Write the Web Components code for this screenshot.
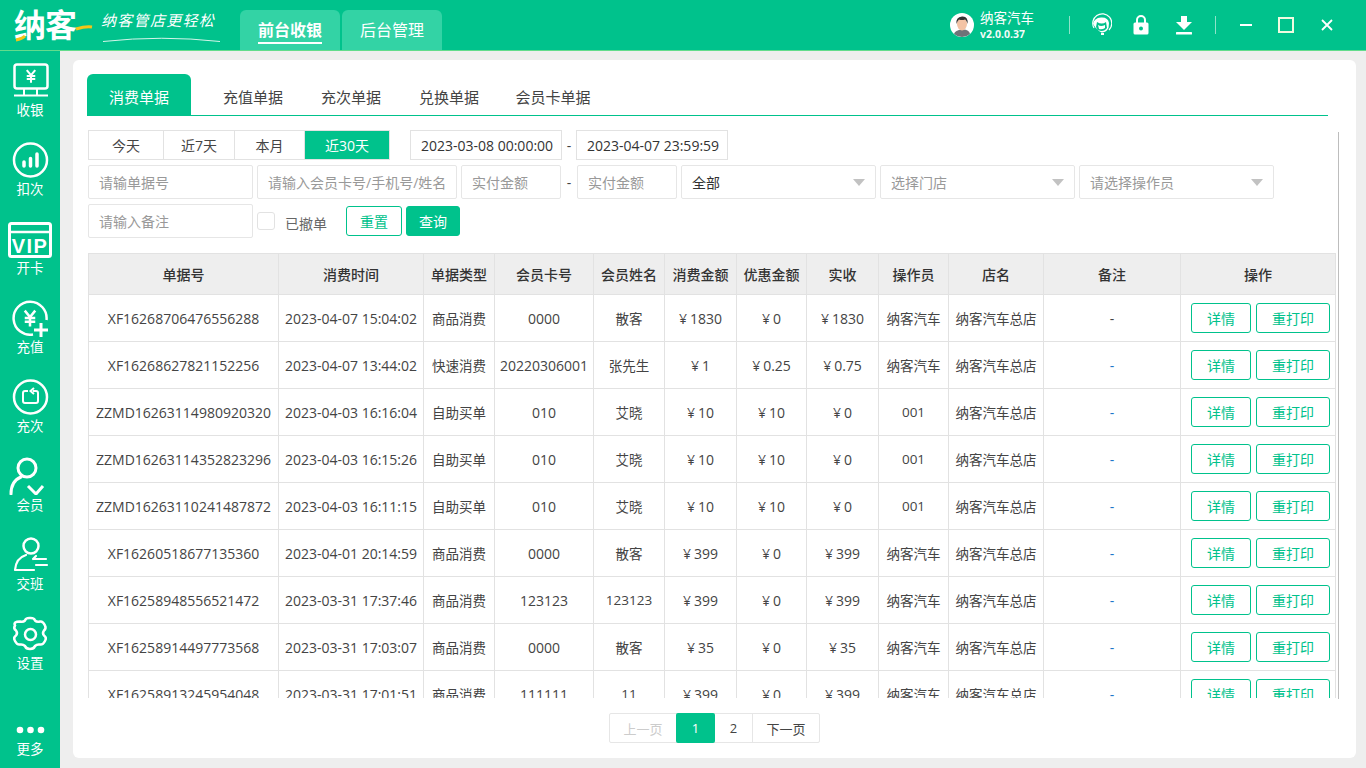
<!DOCTYPE html>
<html lang="zh"><head><meta charset="utf-8"><title>纳客</title>
<style>
html,body{margin:0;height:100%;overflow:hidden}
body{font-family:"Open Sans","Noto Sans CJK SC",sans-serif;font-size:14px;color:#444}
</style></head><body>
<nk-app></nk-app>
<script>
const G='#00c28c';
const base=`*{box-sizing:border-box}`;
function def(name,html,init){
  customElements.define(name,class extends HTMLElement{
    constructor(){super();this.attachShadow({mode:'open'}).innerHTML=typeof html==='function'?html(this):html;}
    connectedCallback(){init&&!this._i&&(this._i=1,init(this));}
  });
}
const W=(d,w,h,extra='')=>`<svg xmlns="http://www.w3.org/2000/svg" width="${w}" height="${h}" viewBox="0 0 ${w} ${h}" fill="none" stroke="#fff" stroke-width="3" ${extra}>${d}</svg>`;

def('nk-top-tab',`<style>${base}:host{display:flex;width:100px;height:40px;background:#33d3a5;border-radius:6px 6px 0 0;align-items:center;justify-content:center;color:#fff;font-size:16px}
:host([active]) span{font-weight:700;border-bottom:2px solid #fff;line-height:22px;padding-bottom:1px;margin-top:3px}
span{display:block;line-height:22px}</style><span><slot></slot></span>`);

def('nk-topbar',`<style>${base}
:host{display:flex;height:51px;background:${G};border-bottom:1px solid #63dc8c;color:#fff;flex:none;position:relative}
.logo{width:240px;height:50px;flex:none;display:flex;align-items:center;position:relative}
.mark{font:700 32px/50px "Noto Sans CJK SC",sans-serif;margin-left:14px;letter-spacing:-1px;width:74px;white-space:nowrap;position:relative;top:-2px}
.acc{position:absolute;left:14px;top:0}
.sl{font:italic 15px/20px "Noto Sans CJK SC",sans-serif;letter-spacing:1.3px;margin-left:13px;white-space:nowrap;position:relative;top:-5px;width:125px}
.sw{position:absolute;left:102px;top:37px}
.tabs{display:flex;gap:2px;align-self:flex-end}
.right{margin-left:auto;display:flex;align-items:center;height:50px}
.user{margin-left:6px;line-height:1}
.n{font-size:13.5px;line-height:18px;margin-top:1px}
.v{font-size:10.5px;font-weight:700;line-height:15px;opacity:.95}
.div{width:1px;height:18px;background:#8fe3c9;flex:none}
svg{display:block;flex:none}
</style>
<div class="logo"><div class="mark">纳客</div>
<svg class="acc" width="90" height="50" viewBox="0 0 90 50" fill="none"><path d="M2 40q6-1 9-4" stroke="#f5c518" stroke-width="3"/><path d="M62 29q10-3 16-2" stroke="#f5c518" stroke-width="3"/></svg>
<div class="sl">纳客管店更轻松</div>
<svg class="sw" width="120" height="6" viewBox="0 0 120 6" fill="none"><path d="M1 4.5Q60-2 118 4.5" stroke="#d5f5ea" stroke-width="1"/></svg>
</div>
<div class="tabs"><nk-top-tab active>前台收银</nk-top-tab><nk-top-tab>后台管理</nk-top-tab></div>
<div class="right">
<svg width="24" height="24" viewBox="0 0 24 24"><circle cx="12" cy="12" r="12" fill="#fff"/><path d="M4 21q1-4 8-4.500t8 4.500q-3.500 3-8 3t-8-3z" fill="#6f7378"/><ellipse cx="12" cy="11" rx="5" ry="6.500" fill="#f3c3a5"/><path d="M6.500 11q-1-7 5.500-7.500t5.500 7.500q-1-4-2.500-4.500-3 1-6 0-1.500 1-2.500 4.500z" fill="#333"/></svg>
<div class="user"><div class="n">纳客汽车</div><div class="v">v2.0.0.37</div></div>
<div class="div" style="margin-left:35px"></div>
<svg style="margin-left:20px" width="22" height="24" viewBox="0 0 22 24" fill="none"><path d="M4 15A9.500 9.500 0 1 1 19 17" stroke="#fff" stroke-width="1.200"/><path d="M3 11q1-6 8-6.500t8 5.500l-.5 5q-2 4-6 4.500l-1 0q-3-1-4-3.500-2-.5-4.500-5.500z" fill="#fff"/><path d="M7 9q5 3 9 0l1 6q-2 3-5.500 3T6 14z" fill="${G}"/><path d="M8 12q3 2 7 0l0 3q-3 2-6 1z" fill="#fff"/><path d="M14 21h-3" stroke="#fff" stroke-width="2"/></svg>
<svg style="margin-left:21px" width="16" height="20" viewBox="0 0 16 20" fill="none"><path d="M4 8V5a4 4 0 0 1 8 0v3" stroke="#fff" stroke-width="2"/><rect x=".5" y="7.500" width="15" height="12" rx="1.500" fill="#fff"/><circle cx="8" cy="13.500" r="2" fill="${G}"/></svg>
<svg style="margin-left:26px" width="18" height="19" viewBox="0 0 18 19"><path d="M6 0h6v6h5l-8 8-8-8h5z" fill="#fff"/><rect x="1" y="16" width="16" height="2.500" rx=".5" fill="#fff"/></svg>
<div class="div" style="margin-left:22px"></div>
<svg style="margin-left:24px" width="12" height="4" viewBox="0 0 12 4"><rect y="1" width="12" height="2" fill="#fff"/></svg>
<svg style="margin-left:26px" width="16" height="16" viewBox="0 0 16 16" fill="none"><rect x="1" y="1" width="14" height="14" stroke="#f0fbe0" stroke-width="2"/></svg>
<svg style="margin-left:27px;margin-right:33px" width="12" height="12" viewBox="0 0 12 12" fill="none"><path d="M1 1l10 10M11 1L1 11" stroke="#fff" stroke-width="1.800"/></svg>
</div>`);

def('nk-side-item',`<style>${base}:host{display:flex;flex-direction:column;align-items:center;height:79px;color:#fff;font-size:13.500px;line-height:20px}
.i{height:44px;width:60px;flex:none}:host([short]){height:auto}:host([short]) .i{height:18px}
span{display:block}</style><div class="i"><slot name="icon"></slot></div><span><slot></slot></span>`);

const yen=(x,y,s=1)=>`<path transform="translate(${x} ${y}) scale(${s})" d="M-5-7l5 6 5-6M0-1V8M-5 0H5M-5 3.500H5" stroke-width="2.400"/>`;
def('nk-sidebar',`<style>${base}:host{display:flex;flex-direction:column;width:60px;background:${G};padding:5px 0 9px;flex:none}
.b{margin-top:auto}svg{display:block}</style>
<nk-side-item><span slot="icon">${W(`<rect x="14.500" y="8.500" width="33" height="24" rx="2.500" stroke-width="2.500"/>${yen(31,20,.85)}<path d="M24 33v7M37 33v7M14 39.500h34" stroke-width="2"/>`,60,44)}</span>收银</nk-side-item>
<nk-side-item><span slot="icon">${W(`<circle cx="30.500" cy="25" r="16.500" stroke-width="2.500"/><path d="M24 27v4M30.500 23.500v7.500M37 19v12" stroke-linecap="round" stroke-width="3.500"/>`,60,44)}</span>扣次</nk-side-item>
<nk-side-item><span slot="icon">${W(`<rect x="9.500" y="9.500" width="41" height="33" rx="2" stroke-width="3"/><path d="M9 18h42" stroke-width="2.500"/><text x="30" y="39" text-anchor="middle" fill="#fff" stroke="none" font-family="Liberation Sans" font-weight="700" font-size="20" letter-spacing="1.500">VIP</text>`,60,44)}</span>开卡</nk-side-item>
<nk-side-item><span slot="icon">${W(`<path d="M33 41.500A16.500 16.500 0 1 1 46.500 27" stroke-width="2.500"/>${yen(30,25,1.050)}<path d="M41 30v14M34 37h14" stroke-width="3"/>`,60,44)}</span>充值</nk-side-item>
<nk-side-item><span slot="icon">${W(`<circle cx="30.500" cy="25" r="16.500" stroke-width="2.500"/><path d="M28 19h-3a2 2 0 0 0-2 2v8a2 2 0 0 0 2 2h11a2 2 0 0 0 2-2v-8a2 2 0 0 0-2-2h-3M34 16l-3.500 3 3.500 3" stroke-width="2"/>`,60,44)}</span>充次</nk-side-item>
<nk-side-item><span slot="icon">${W(`<circle cx="27" cy="17" r="9" stroke-width="3"/><path d="M11 43q0-13 10-17" stroke-width="3" stroke-linecap="round"/><path d="M28 35l8 8 7-8" stroke-width="3"/>`,60,44)}</span>会员</nk-side-item>
<nk-side-item><span slot="icon">${W(`<circle cx="31" cy="16" r="7.500" stroke-width="2.500"/><path d="M15 40q1-12 11-15M15 40h19M33 29h13M33 29l3-3M36 35h11" stroke-width="2.200" stroke-linecap="round"/>`,60,44)}</span>交班</nk-side-item>
<nk-side-item><span slot="icon">${W(`<path d="M30.500 9q4 0 4.500 2.500 2 2 5 1 3-.500 5 4 1.500 3-1 5-2 2.500 0 5 3 2 1 5.500-2 4-5 3.500-3-.500-5 1.500-1 3-5 3t-5-3q-2-2-5-1.500-3 .5-5-3.500-2-3.500 1-5.500 2-2.500 0-5-3-2-1-5-2-4 5-4 3 1 5-1 .500-2.500 4.500-2.500z" stroke-width="2.500"/><circle cx="30.500" cy="25.500" r="5.500" stroke-width="2.500"/>`,60,44)}</span>设置</nk-side-item>
<nk-side-item short class="b"><span slot="icon"><svg width="60" height="18" viewBox="0 0 60 18"><circle cx="20" cy="9" r="3.300" fill="#fff"/><circle cx="30.500" cy="9" r="3.300" fill="#fff"/><circle cx="41" cy="9" r="3.300" fill="#fff"/></svg></span>更多</nk-side-item>`);

def('nk-tab',`<style>${base}:host{display:flex;align-items:center;justify-content:center;width:104px;height:42px;margin-right:-4px;font-size:15px;color:#444;border-radius:6px 6px 0 0;padding-top:2px}
:host([active]){background:${G};color:#fff;margin-right:-4px}</style><slot></slot>`);
def('nk-tabs',`<style>${base}:host{display:flex;border-bottom:1px solid ${G};height:42px;margin-right:14px}
nk-tab{flex:none}</style>
<nk-tab active>消费单据</nk-tab><nk-tab style="margin-left:12px;width:108px">充值单据</nk-tab><nk-tab style="margin-left:-6px;width:108px">充次单据</nk-tab><nk-tab style="margin-left:-6px;width:108px">兑换单据</nk-tab><nk-tab style="margin-left:-2px;width:112px">会员卡单据</nk-tab>`);

def('nk-seg',`<style>${base}:host{display:flex;height:30px;border:1px solid #e2e2e2;flex:none}
span{display:flex;align-items:center;justify-content:center;border-right:1px solid #e2e2e2;font-size:14px;color:#444}
span:last-child{border:0}.on{background:${G};color:#fff}</style>
<span style="width:75px">今天</span><span style="width:71px">近7天</span><span style="width:70px">本月</span><span class="on" style="width:84px">近30天</span>`);
def('nk-date',`<style>${base}:host{display:flex;align-items:center;height:30px;width:152px;border:1px solid #e2e2e2;flex:none;padding-left:10px;font-size:14px;color:#333;white-space:nowrap}</style><slot></slot>`);
def('nk-input',`<style>${base}:host{display:flex;align-items:center;height:34px;border:1px solid #e6e6e6;border-radius:2px;flex:none;padding-left:10px;font-size:14px;color:#999;white-space:nowrap;overflow:hidden}</style><slot></slot>`);
def('nk-select',`<style>${base}:host{display:flex;align-items:center;justify-content:space-between;height:34px;width:195px;border:1px solid #e6e6e6;border-radius:2px;flex:none;padding:0 10px;font-size:14px;color:#999;white-space:nowrap}
:host([val]){color:#333}i{width:0;height:0;border:6px solid transparent;border-top:7px solid #c2c2c2;border-bottom:0;display:block}</style><slot></slot><i></i>`);
def('nk-btn',`<style>${base}:host{display:inline-flex;align-items:center;justify-content:center;height:30px;border:1px solid ${G};border-radius:3px;color:${G};background:#fff;font-size:14px;flex:none;white-space:nowrap}
:host([fill]){background:${G};color:#fff}</style><slot></slot>`);

def('nk-filters',`<style>${base}:host{display:block;padding-top:14px}
.r{display:flex;align-items:center}.dash{color:#444;text-align:center}
.r1{height:30px}.r2{margin-top:5px;gap:4px}.r3{margin-top:5px;height:34px}
.chk{width:18px;height:18px;border:1px solid #e2e2e2;border-radius:3px;margin-left:4px;flex:none}
.l{margin-left:10px;color:#666;font-size:14px;padding-top:4px;width:61px;flex:none}</style>
<div class="r r1"><nk-seg></nk-seg><nk-date style="margin-left:20px">2023-03-08 00:00:00</nk-date><span class="dash" style="width:14px">-</span><nk-date>2023-04-07 23:59:59</nk-date></div>
<div class="r r2"><nk-input style="width:165px">请输单据号</nk-input><nk-input style="width:200px">请输入会员卡号/手机号/姓名</nk-input><nk-input style="width:100px">实付金额</nk-input><span class="dash" style="width:8px;margin-right:0">-</span><nk-input style="width:100px">实付金额</nk-input><nk-select val>全部</nk-select><nk-select>选择门店</nk-select><nk-select>请选择操作员</nk-select></div>
<div class="r r3"><nk-input style="width:165px">请输入备注</nk-input><div class="chk"></div><div class="l">已撤单</div><nk-btn style="width:56px;margin-top:0">重置</nk-btn><nk-btn fill style="width:54px;margin-left:4px">查询</nk-btn></div>`);

const yn=v=>`<span class="y">¥</span>${v}`;
const rows=[
['XF16268706476556288','2023-04-07 15:04:02','商品消费','0000','散客','1830','0','1830','纳客汽车'],
['XF16268627821152256','2023-04-07 13:44:02','快速消费','20220306001','张先生','1','0.25','0.75','纳客汽车'],
['ZZMD16263114980920320','2023-04-03 16:16:04','自助买单','010','艾晓','10','10','0','001'],
['ZZMD16263114352823296','2023-04-03 16:15:26','自助买单','010','艾晓','10','10','0','001'],
['ZZMD16263110241487872','2023-04-03 16:11:15','自助买单','010','艾晓','10','10','0','001'],
['XF16260518677135360','2023-04-01 20:14:59','商品消费','0000','散客','399','0','399','纳客汽车'],
['XF16258948556521472','2023-03-31 17:37:46','商品消费','123123','123123','399','0','399','纳客汽车'],
['XF16258914497773568','2023-03-31 17:03:07','商品消费','0000','散客','35','0','35','纳客汽车'],
['XF16258913245954048','2023-03-31 17:01:51','商品消费','111111','11','399','0','399','纳客汽车']];
const widths=[190,145,71,99,71,72,70,72,70,95,137,155];
const heads=['单据号','消费时间','单据类型','会员卡号','会员姓名','消费金额','优惠金额','实收','操作员','店名','备注','操作'];
def('nk-table',`<style>${base}:host{display:block;margin-top:15px;height:445px;overflow:hidden;width:1248px}
table{border-collapse:collapse;table-layout:fixed;width:1247.500px;font-size:14px;color:#444}
th,td{border:1px solid #e2e2e2;padding:0;text-align:center;white-space:nowrap;overflow:hidden}
th{height:41px;background:#eee;font-weight:500;color:#333}
td{height:47px}
td.s{font-size:13.500px}
.y{margin-right:3px}
.d{color:#1b78c9}
td.o{text-align:left;padding-left:10px}
nk-btn+nk-btn{margin-left:5px}</style>
<table><colgroup>${widths.map(w=>`<col style="width:${w}px">`).join('')}</colgroup>
<thead><tr>${heads.map(h=>`<th>${h}</th>`).join('')}</tr></thead>
<tbody>${rows.map((r,i)=>`<tr><td>${r[0]}</td><td>${r[1]}</td><td class="s">${r[2]}</td><td>${r[3]}</td><td class="s">${r[4]}</td><td>${yn(r[5])}</td><td>${yn(r[6])}</td><td>${yn(r[7])}</td><td class="s">${r[8]}</td><td class="s">纳客汽车总店</td><td class="${i?'d':''}">-</td><td class="o"><nk-btn style="width:60px">详情</nk-btn><nk-btn style="width:74px">重打印</nk-btn></td></tr>`).join('')}</tbody></table>`);

def('nk-pager',`<style>${base}:host{display:flex;justify-content:center;margin-top:15px;padding-left:0}
.p{display:flex;height:30px;border:1px solid #e6e6e6;border-radius:2px;font-size:13px;width:211px}
span{display:flex;align-items:center;justify-content:center;color:#444;border-right:1px solid #e6e6e6}
span:last-child{border:0}.dis{color:#ccc;border:0}.on{background:${G};color:#fff;border:0;border-radius:2px;margin:-1px 0;height:30px}</style>
<div class="p"><span class="dis" style="width:66px">上一页</span><span class="on" style="width:39px">1</span><span style="width:38px">2</span><span style="width:66px">下一页</span></div>`);

def('nk-card',`<style>${base}:host{display:block;background:#fff;border-radius:6px;height:698px;padding:14px 14px 0;position:relative;width:1283px;overflow:hidden}
.scroll{position:absolute;left:1265px;top:72px;width:1px;height:567px;background:#bdbdbd}
.in{padding-left:1px}</style>
<nk-tabs></nk-tabs><div class="in"><nk-filters></nk-filters><nk-table></nk-table></div><nk-pager></nk-pager><div class="scroll"></div>`);

def('nk-app',`<style>${base}:host{display:flex;flex-direction:column;width:1366px;height:768px;background:#eee;overflow:hidden}
.b{display:flex;flex:1;min-height:0}.m{padding:9px 0 0 13px}</style>
<nk-topbar></nk-topbar><div class="b"><nk-sidebar></nk-sidebar><div class="m"><nk-card></nk-card></div></div>`);
</script></body></html>
